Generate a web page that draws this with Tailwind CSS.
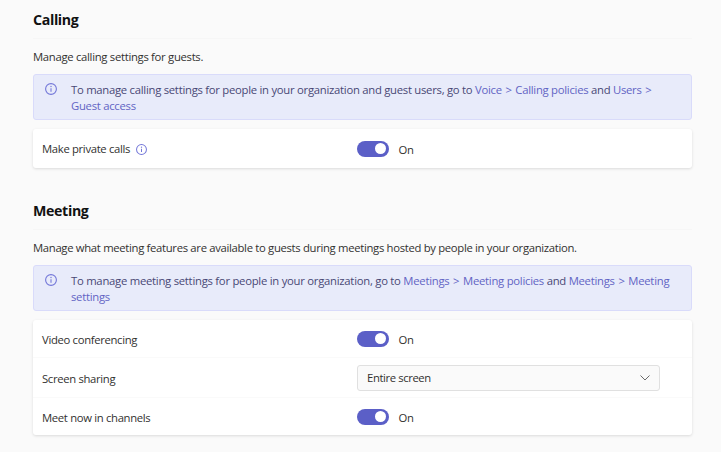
<!DOCTYPE html>
<html lang="en">
<head>
<meta charset="utf-8">
<title>Guest access</title>
<script src="https://cdn.jsdelivr.net/npm/@tailwindcss/browser@4"></script>
</head>
<body class="h-[452px] overflow-hidden bg-[#fafafa] pl-[33px] pr-[29.5px] font-['Open_Sans','Noto_Sans',sans-serif] text-[11.3px] leading-4 tracking-[-0.33px] text-[#323130]">
<svg class="hidden">
  <symbol id="info" viewBox="0 0 12 12"><circle cx="6" cy="6" r="5.4" fill="none" stroke="currentColor" stroke-width="1.1"/><path d="M6 5.2v3.5" stroke="currentColor" stroke-width="1.1"/><circle cx="6" cy="3.5" r=".7" fill="currentColor"/></symbol>
</svg>

<section class="h-[191px]">
  <h2 class="h-[39px] border-b border-[#f6f6f6] pt-[10px] text-[14.2px] leading-5 font-bold tracking-[-0.35px] text-[#111]">Calling</h2>
  <p class="h-[35px] pt-[10px] tracking-[-0.3px] whitespace-nowrap">Manage calling settings for guests.</p>
  <div class="-ml-[0.5px] flex h-[46px] rounded-[3px] border border-[#d9dbfa] bg-[#e8ebfa] pt-[7px] pl-[11.5px] tracking-[-0.27px] whitespace-nowrap text-[#484875]">
    <svg class="mt-px h-3 w-3 shrink-0 text-[#7377d8]"><use href="#info"/></svg>
    <p class="ml-[14px]">To manage calling settings for people in your organization and guest users, go to <a class="text-[#6264c4]">Voice <span class="mx-px">&gt;</span> Calling policies</a> and <a class="text-[#6264c4]">Users <span class="mx-px">&gt;</span><br>Guest access</a></p>
  </div>
  <div class="-ml-[0.5px] mt-[9px] flex h-[39px] items-center rounded-[3px] bg-white pl-[9.5px] shadow-[0_1px_3px_rgba(0,0,0,0.13)]">
    <div class="flex w-[315px] items-center gap-[6px] pt-px">Make private calls <svg class="h-[11px] w-[11px] text-[#7377d8]" viewBox="0 0 12 12"><use href="#info"/></svg></div>
    <div class="flex h-4 w-8 items-center justify-end rounded-full bg-[#5b5fc7] pr-[3px]"><div class="h-[11px] w-[11px] rounded-full bg-white"></div></div>
    <span class="ml-[9.5px] pt-[2px]">On</span>
  </div>
</section>

<section>
  <h2 class="h-[39px] border-b border-[#f6f6f6] pt-[10px] text-[14.2px] leading-5 font-bold tracking-[-0.35px] text-[#111]">Meeting</h2>
  <p class="h-[35px] pt-[10px] tracking-[-0.32px] whitespace-nowrap">Manage what meeting features are available to guests during meetings hosted by people in your organization.</p>
  <div class="-ml-[0.5px] flex h-[46px] rounded-[3px] border border-[#d9dbfa] bg-[#e8ebfa] pt-[7px] pl-[11.5px] tracking-[-0.26px] whitespace-nowrap text-[#484875]">
    <svg class="mt-px h-3 w-3 shrink-0 text-[#7377d8]"><use href="#info"/></svg>
    <p class="ml-[14px]">To manage meeting settings for people in your organization, go to <a class="text-[#6264c4]">Meetings <span class="mx-px">&gt;</span> Meeting policies</a> and <a class="text-[#6264c4]">Meetings <span class="mx-px">&gt;</span> Meeting<br>settings</a></p>
  </div>
  <div class="-ml-[0.5px] mt-[9px] h-[115px] rounded-[3px] bg-white shadow-[0_1px_3px_rgba(0,0,0,0.13)]">
    <div class="flex h-[38px] items-center border-b border-[#fafafa] pl-[9.5px]">
      <div class="w-[315px] pt-[3px]">Video conferencing</div>
      <div class="flex h-4 w-8 items-center justify-end rounded-full bg-[#5b5fc7] pr-[3px]"><div class="h-[11px] w-[11px] rounded-full bg-white"></div></div>
      <span class="ml-[9.5px] pt-[3px]">On</span>
    </div>
    <div class="flex h-10 items-center border-b border-[#fafafa] pl-[9.5px]">
      <div class="w-[315px] pt-[2px]">Screen sharing</div>
      <div class="flex h-[26px] w-[302.5px] items-center justify-between rounded-[3px] border border-[#e0e0e0] bg-[#fafafa] pr-[8.5px] pl-[9px] tracking-[-0.4px]"><span>Entire screen</span><svg class="h-[6px] w-[10px]" viewBox="0 0 10 6" fill="none" stroke="#6b6b6b"><path d="M.5.5 5 5 9.5.5"/></svg></div>
    </div>
    <div class="flex h-[37px] items-center pl-[9.5px]">
      <div class="w-[315px] pt-[3px]">Meet now in channels</div>
      <div class="flex h-4 w-8 items-center justify-end rounded-full bg-[#5b5fc7] pr-[3px]"><div class="h-[11px] w-[11px] rounded-full bg-white"></div></div>
      <span class="ml-[9.5px] pt-[3px]">On</span>
    </div>
  </div>
</section>
</body>
</html>
